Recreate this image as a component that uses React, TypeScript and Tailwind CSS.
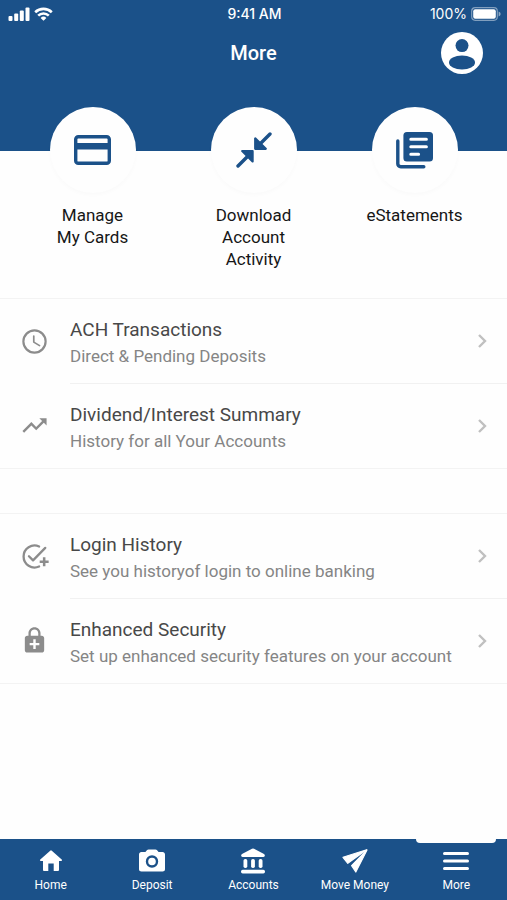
import type { ReactNode } from "react";
import { MdEnhancedEncryption, MdTrendingUp } from "react-icons/md";

interface Shortcut {
  label: string;
  icon: ReactNode;
}

interface MenuItem {
  title: string;
  description: string;
  icon: ReactNode;
}

function SignalIcon() {
  return (
    <svg width="22" height="14" viewBox="0 0 22 14" fill="currentColor" aria-hidden="true">
      <rect x="0.5" y="9" width="4" height="5" rx="1" />
      <rect x="6.2" y="6.5" width="4" height="7.5" rx="1" />
      <rect x="11.8" y="3.5" width="4" height="10.5" rx="1" />
      <rect x="17.5" y="0.5" width="4" height="13.5" rx="1" />
    </svg>
  );
}

function WifiIcon() {
  return (
    <svg width="19" height="14" viewBox="0 0 19 14" fill="none" stroke="currentColor" strokeWidth="2.6" aria-hidden="true">
      <path d="M1.2 5.2a12 12 0 0 1 16.6 0" />
      <path d="M4.2 8.6a7.6 7.6 0 0 1 10.6 0" />
      <path d="M9.5 13.8 6.6 10.9a4.2 4.2 0 0 1 5.8 0z" fill="currentColor" stroke="none" />
    </svg>
  );
}

function BatteryIcon() {
  return (
    <svg width="30" height="14" viewBox="0 0 30 14" aria-hidden="true">
      <rect x="0.7" y="0.7" width="25.6" height="12.6" rx="3.5" fill="none" stroke="#fff" strokeOpacity="0.45" strokeWidth="1.2" />
      <rect x="2.2" y="2.2" width="22.6" height="9.6" rx="2" fill="#fff" />
      <path d="M27.6 4.6c1.3.4 2 1.3 2 2.4s-.7 2-2 2.4z" fill="#fff" fillOpacity="0.5" />
    </svg>
  );
}

function ProfileIcon() {
  return (
    <svg width="42" height="42" viewBox="0 0 42 42" aria-hidden="true">
      <circle cx="21" cy="21" r="21" fill="#fff" />
      <circle cx="21" cy="13.6" r="6.5" fill="#1b5189" />
      <ellipse cx="21" cy="30.5" rx="13" ry="6.9" fill="#1b5189" />
    </svg>
  );
}

function CardIcon() {
  return (
    <svg width="37" height="30" viewBox="0 0 37 30" aria-hidden="true">
      <rect x="1.7" y="1.7" width="33.6" height="26.6" rx="2.6" fill="none" stroke="currentColor" strokeWidth="3.4" />
      <path d="M1 8h35v6.5H1z" fill="currentColor" />
    </svg>
  );
}

function CompressIcon() {
  return (
    <svg width="36" height="36" viewBox="0 0 36 36" fill="currentColor" stroke="currentColor" strokeLinecap="round" strokeLinejoin="round" aria-hidden="true">
      <path d="M34 2 23 13M2 34l11-11" strokeWidth="3.4" />
      <path d="M19.2 6.4v10.400h10.600z" strokeWidth="2.2" />
      <path d="M16.600 29.400V19H6.200z" strokeWidth="2.2" />
    </svg>
  );
}

function StatementsIcon() {
  return (
    <svg width="37" height="37" viewBox="0 0 37 37" fill="none" strokeLinecap="round" strokeLinejoin="round" aria-hidden="true">
      <rect x="7.4" y="0" width="29.6" height="29.5" rx="3.5" fill="currentColor" />
      <path d="M14.8 7.2h15.6M14.8 14.700h15.6M14.8 22.2h7.8" stroke="#fff" strokeWidth="3" />
      <path d="M1.8 9v22.5a3 3 0 0 0 3 3.2h23" stroke="currentColor" strokeWidth="3.4" />
    </svg>
  );
}

function ClockIcon() {
  return (
    <svg width="29" height="29" viewBox="0 0 24 24" fill="none" stroke="currentColor" strokeLinecap="round" strokeLinejoin="round" aria-hidden="true">
      <circle cx="12" cy="12" r="9.2" strokeWidth="1.8" />
      <path d="M11.4 7.5v5l4.8 2.9" strokeWidth="1.4" />
    </svg>
  );
}

function LoginHistoryIcon() {
  return (
    <svg width="29" height="29" viewBox="0 0 24 24" fill="none" stroke="currentColor" strokeWidth="1.9" strokeLinecap="round" strokeLinejoin="round" aria-hidden="true">
      <path d="M15.8 3.7A9.1 9.1 0 1 0 15.8 20.3" />
      <path d="m7.4 11.8 3.4 3.4L20.9 4.9" />
      <path d="M20 12.700v7.400M16.300 16.400h7.400" strokeLinecap="butt" strokeWidth="2.1" />
    </svg>
  );
}

function ChevronIcon() {
  return (
    <svg width="9" height="14" viewBox="0 0 9 14" fill="none" stroke="#c0c0c0" strokeWidth="2.4" aria-hidden="true">
      <path d="m1 1 6 6-6 6" />
    </svg>
  );
}

function HomeIcon() {
  return (
    <svg width="26" height="24" viewBox="0 0 26 24" fill="currentColor" aria-hidden="true">
      <path d="M12.2 1.700a1.2 1.2 0 0 1 1.6 0L23.7 10.500c.7.6.3 1.5-.5 1.5H21v8.700c0 .8-.5 1.3-1.3 1.3h-4v-7.500h-5.400V22h-4c-.8 0-1.3-.5-1.3-1.3V12H2.800c-.8 0-1.2-.9-.5-1.5z" />
    </svg>
  );
}

function CameraIcon() {
  return (
    <svg width="26" height="24" viewBox="0 0 26 24" aria-hidden="true">
      <path d="M9.5.5h7c.6 0 1 .2 1.4.6l1.700 2h4c1.3 0 2.4 1 2.4 2.3v14.800c0 1.3-1.1 2.3-2.4 2.3H2.400C1.100 22.500 0 21.500 0 20.200V5.400c0-1.3 1.100-2.300 2.400-2.300h4l1.700-2c.4-.4.8-.6 1.400-.6z" fill="currentColor" />
      <circle cx="13" cy="12.5" r="5" fill="none" stroke="#1b5189" strokeWidth="2.4" />
    </svg>
  );
}

function BankIcon() {
  return (
    <svg width="26" height="26" viewBox="0 0 26 26" fill="currentColor" aria-hidden="true">
      <path d="M12 .8a2 2 0 0 1 2 0l10 5.300c1.4.8 1 2.900-.6 2.900H2.600C1 9 .6 6.900 2 6.100z" />
      <rect x="3.5" y="11" width="3.8" height="9" rx="1.7" />
      <rect x="11.1" y="11" width="3.8" height="9" rx="1.7" />
      <rect x="18.700" y="11" width="3.8" height="9" rx="1.7" />
      <rect x="1" y="21.8" width="24" height="3.6" rx="1.7" />
    </svg>
  );
}

function PlaneIcon() {
  return (
    <svg width="26" height="24" viewBox="0 0 26 24" fill="currentColor" stroke="currentColor" strokeLinejoin="round" aria-hidden="true">
      <path d="M24.6.8 1 8.300l4.800 6z" strokeWidth="1.2" />
      <path d="M25 1 9.600 16.600l4.200 6.400z" strokeWidth="1.2" />
    </svg>
  );
}

function MenuIcon() {
  return (
    <svg width="26" height="18" viewBox="0 0 26 18" stroke="currentColor" strokeWidth="3" strokeLinecap="round" aria-hidden="true">
      <path d="M1.5 1.5h23M1.5 9h23M1.5 16.5h23" />
    </svg>
  );
}

const shortcuts: Shortcut[] = [
  { label: "Manage\nMy Cards", icon: <CardIcon /> },
  { label: "Download\nAccount\nActivity", icon: <CompressIcon /> },
  { label: "eStatements", icon: <StatementsIcon /> },
];

const sections: MenuItem[][] = [
  [
    { title: "ACH Transactions", description: "Direct & Pending Deposits", icon: <ClockIcon /> },
    { title: "Dividend/Interest Summary", description: "History for all Your Accounts", icon: <MdTrendingUp size={29} /> },
  ],
  [
    { title: "Login History", description: "See you historyof login to online banking", icon: <LoginHistoryIcon /> },
    { title: "Enhanced Security", description: "Set up enhanced security features on your account", icon: <MdEnhancedEncryption size={29} /> },
  ],
];

const tabs = [
  { label: "Home", icon: <HomeIcon /> },
  { label: "Deposit", icon: <CameraIcon /> },
  { label: "Accounts", icon: <BankIcon /> },
  { label: "Move Money", icon: <PlaneIcon /> },
  { label: "More", icon: <MenuIcon />, active: true },
];

export default function App() {
  return (
    <div className="flex min-h-screen flex-col bg-[#fefefe] font-['Roboto',sans-serif]">
      {/* Header */}
      <header className="bg-[#1b5189] pb-[77px] text-white">
        <div className="grid grid-cols-3 items-center pt-1 pr-1.5 pl-2 font-['Inter',sans-serif] text-sm leading-5">
          <div className="flex items-center gap-1">
            <SignalIcon />
            <WifiIcon />
          </div>
          <span className="text-center font-medium">9:41 AM</span>
          <div className="flex items-center justify-end gap-1">
            <span>100%</span>
            <BatteryIcon />
          </div>
        </div>
        <div className="grid grid-cols-[1fr_auto_1fr] items-center px-6 pt-2">
          <h1 className="col-start-2 text-xl font-medium">More</h1>
          <button type="button" aria-label="Profile" className="justify-self-end">
            <ProfileIcon />
          </button>
        </div>
      </header>

      {/* Shortcuts */}
      <div className="-mt-11 grid grid-cols-3 px-3 pb-7">
        {shortcuts.map((s) => (
          <a key={s.label} href="#" className="flex flex-col items-center gap-[11px]">
            <span className="flex size-[86px] items-center justify-center rounded-full bg-[#fefefe] text-[#1b5189] shadow-[0_2px_4px_rgba(0,0,0,0.02)]">
              {s.icon}
            </span>
            <span className="text-center text-[17px] leading-[22px] whitespace-pre-line text-[#161616]">{s.label}</span>
          </a>
        ))}
      </div>

      {/* Menu */}
      <main className="flex flex-1 flex-col gap-11">
        {sections.map((items) => (
          <ul key={items[0].title} className="border-y border-[#f3f3f3]">
            {items.map((item, i) => (
              <li key={item.title}>
                <a href="#" className="flex items-center pl-5">
                  <span className="w-[50px] shrink-0 text-[#8c8c8c]">{item.icon}</span>
                  <span
                    className={`flex flex-1 items-center justify-between pr-5 ${
                      i > 0 ? "border-t border-[#f1f1f1]" : ""
                    }`}
                  >
                    <span className="flex flex-col pt-[18px] pb-3.5">
                      <span className="text-[19px] leading-[26px] text-[#484848]">{item.title}</span>
                      <span className="text-[17px] leading-[26px] text-[#858585]">{item.description}</span>
                    </span>
                    <ChevronIcon />
                  </span>
                </a>
              </li>
            ))}
          </ul>
        ))}
      </main>

      {/* Tab bar */}
      <nav className="grid grid-cols-5 bg-[#1b5189] text-white">
        {tabs.map((tab) => (
          <a
            key={tab.label}
            href="#"
            aria-current={tab.active ? "page" : undefined}
            className="relative flex flex-col items-center gap-0.5 pt-2 pb-[7px] text-xs"
          >
            {tab.active && <span className="absolute top-0 h-1 w-20 rounded-b bg-[#fefefe]" />}
            <span className="flex h-7 items-center">{tab.icon}</span>
            <span>{tab.label}</span>
          </a>
        ))}
      </nav>
    </div>
  );
}
